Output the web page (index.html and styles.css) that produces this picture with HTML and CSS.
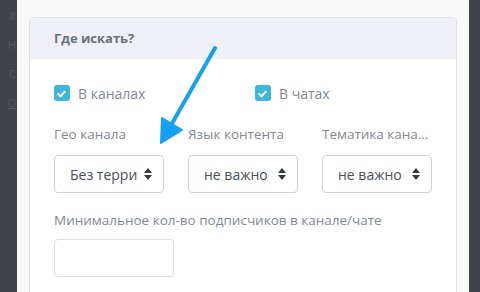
FILE: index.html
```html
<!DOCTYPE html>
<html lang="ru">
<head>
  <meta charset="UTF-8">
  <title>Где искать?</title>
  <link rel="stylesheet" href="styles.css">
</head>
<body>

  <!-- Dimmed page behind the modal -->
  <div class="backdrop">
    <span>#</span>
    <span>Н</span>
    <span>С</span>
    <span class="under">О</span>
  </div>

  <div class="modal">
    <div class="card">
      <div class="card-header">Где искать?</div>

      <div class="card-body">
        <div class="check-row">
          <label class="check"><span class="box"></span>В каналах</label>
          <label class="check"><span class="box"></span>В чатах</label>
        </div>

        <div class="fields">
          <div class="field">
            <div class="label">Гео канала</div>
            <div class="select">
              <span class="value">Без терри</span>
              <svg class="sort" width="8" height="12" viewBox="0 0 8 12"><path d="M4 0 L8 5 H0 Z M0 7 H8 L4 12 Z" fill="#343a40"/></svg>
            </div>
          </div>
          <div class="field">
            <div class="label">Язык контента</div>
            <div class="select">
              <span class="value">не важно</span>
              <svg class="sort" width="8" height="12" viewBox="0 0 8 12"><path d="M4 0 L8 5 H0 Z M0 7 H8 L4 12 Z" fill="#343a40"/></svg>
            </div>
          </div>
          <div class="field">
            <div class="label">Тематика канала</div>
            <div class="select">
              <span class="value">не важно</span>
              <svg class="sort" width="8" height="12" viewBox="0 0 8 12"><path d="M4 0 L8 5 H0 Z M0 7 H8 L4 12 Z" fill="#343a40"/></svg>
            </div>
          </div>
        </div>

        <div class="label wide">Минимальное кол-во подписчиков в канале/чате</div>
        <div class="input"></div>
      </div>
    </div>
  </div>

  <div class="backdrop right"></div>

  <!-- Annotation arrow drawn over the screenshot -->
  <svg class="pointer" width="480" height="292" viewBox="0 0 480 292">
    <line x1="215" y1="48" x2="170" y2="127" stroke="#14a1f5" stroke-width="4" stroke-linecap="round"/>
    <path d="M161 143 L162 118 L182 130 Z" fill="#14a1f5" stroke="#14a1f5" stroke-width="2" stroke-linejoin="round"/>
  </svg>

</body>
</html>
```

FILE: styles.css
```css
/* Page and font */
html, body {
  margin: 0;
  padding: 0;
  height: 100%;
  overflow: hidden;
}
body {
  display: flex;
  background: #404347;
  font-family: "Open Sans", "Noto Sans", sans-serif;
  color: #838993;
}

/******************************************************
 * BACKDROP
 ******************************************************/
.backdrop {
  width: 17px;
  flex: none;
  display: flex;
  flex-direction: column;
  align-items: flex-end;
  padding: 8px 1px 0 0;
  box-sizing: border-box;
  font-size: 11px;
  color: #55585c;
}
.backdrop span {
  height: 29px;
}
.backdrop .under {
  text-decoration: underline;
}
.backdrop.right {
  width: 11px;
}

/******************************************************
 * MODAL
 ******************************************************/
.modal {
  width: 452px;
  flex: none;
  background: #f9f9f9;
  padding: 17px 12px 0 12px;
  box-sizing: border-box;
}
.card {
  height: 100%;
  background: #fff;
  border: 1px solid #dfe2e7;
  border-bottom: none;
  border-radius: 5px 5px 0 0;
}
.card-header {
  height: 41px;
  line-height: 41px;
  padding: 0 24px;
  background: #eef0f5;
  border-radius: 4px 4px 0 0;
  font-weight: bold;
  font-size: 13px;
  color: #6b717c;
}
.card-body {
  padding: 26px 0 0 24px;
}

/* Checkboxes */
.check-row {
  display: grid;
  grid-template-columns: 201px 201px;
}
.check {
  display: flex;
  align-items: center;
  gap: 8px;
  font-size: 14px;
  height: 16px;
}
.box {
  width: 16px;
  height: 16px;
  border-radius: 3px;
  background: #3db6dc;
  position: relative;
}
.box::after {
  content: "";
  position: absolute;
  left: 5px;
  top: 3.5px;
  width: 3px;
  height: 6px;
  border: solid #fff;
  border-width: 0 2px 2px 0;
  transform: rotate(45deg);
}

/* Selects */
.fields {
  display: grid;
  grid-template-columns: repeat(3, 134px);
  margin-top: 25px;
}
.label {
  font-size: 13.5px;
  height: 16px;
  line-height: 16px;
  width: 110px;
  white-space: nowrap;
  overflow: hidden;
  text-overflow: ellipsis;
}
.label.wide {
  width: auto;
  margin-top: 19px;
}
.select {
  margin-top: 13px;
  width: 110px;
  height: 38px;
  box-sizing: border-box;
  border: 1px solid #ced4da;
  border-radius: 4px;
  display: flex;
  align-items: center;
  padding: 0 11px 0 15px;
  font-size: 14px;
  color: #495057;
}
.select .value {
  flex: 1;
  white-space: nowrap;
  overflow: hidden;
}
.select .sort {
  flex: none;
  margin-left: 4px;
}

/* Text input */
.input {
  margin-top: 11px;
  width: 120px;
  height: 38px;
  box-sizing: border-box;
  border: 1px solid #dcdfe4;
  border-radius: 4px;
}

/* Arrow annotation */
.pointer {
  position: absolute;
  left: 0;
  top: 0;
  pointer-events: none;
}
```
